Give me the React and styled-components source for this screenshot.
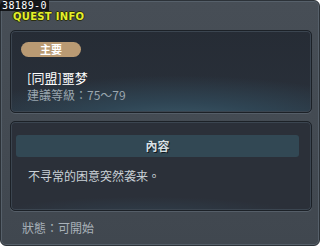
import React from 'react'
import styled, { createGlobalStyle } from 'styled-components'

const GlobalStyle = createGlobalStyle`
  html, body {
    margin: 0;
    padding: 0;
    background: #ffffff;
  }
  body {
    font-family: "Noto Sans CJK TC", "Noto Sans CJK SC", "DejaVu Sans", sans-serif;
  }
`

export const Window = styled.div`
  position: relative;
  width: 320px;
  height: 246px;
  box-sizing: border-box;
  background: linear-gradient(180deg, #474e56 0%, #434a52 60%, #40474f 100%);
  border: 1px solid #2c3238;
  border-radius: 6px;
  box-shadow: inset 0 0 0 1px #56606a;
  padding: 10px 8px 0 9px;
  display: flex;
  flex-direction: column;
`

export const IdTag = styled.div`
  position: absolute;
  left: -1px;
  top: -1px;
  padding: 0 2px 0 2px;
  height: 11px;
  line-height: 11px;
  background: rgba(10, 12, 14, 0.85);
  color: #ffffff;
  font-family: "DejaVu Sans Mono", "Liberation Mono", monospace;
  font-size: 10px;
  letter-spacing: 0.4px;
`

export const Title = styled.div`
  height: 9px;
  line-height: 9px;
  margin-top: 1px;
  padding-left: 3px;
  font-family: "DejaVu Sans", sans-serif;
  font-weight: bold;
  font-size: 10px;
  letter-spacing: 0.3px;
  color: #e4f02a;
  text-shadow: 1px 0 0 #2a2e10, -1px 0 0 #2a2e10, 0 1px 0 #2a2e10, 0 -1px 0 #2a2e10;
  margin-bottom: 9px;
`

export const Card = styled.div`
  box-sizing: border-box;
  width: 302px;
  height: ${p => p.$h}px;
  border: 1px solid #1c2127;
  border-radius: 5px;
  box-shadow: inset 0 0 0 1px #3b4550, 0 1px 0 #555e68;
  background: ${p => p.$bg};
  margin-bottom: ${p => p.$mb || 0}px;
  display: flex;
  flex-direction: column;
`

export const Badge = styled.div`
  width: 60px;
  height: 15px;
  border-radius: 8px;
  background: #b99a73;
  color: #ffffff;
  font-weight: bold;
  font-size: 11px;
  line-height: 15px;
  text-align: center;
  margin: 11px 0 0 10px;
`

export const QuestName = styled.div`
  color: #ffffff;
  font-size: 13px;
  line-height: 15px;
  margin: 13px 0 0 16px;
`

export const Level = styled.div`
  color: #9aa6af;
  font-size: 12px;
  line-height: 14px;
  margin: 3px 0 0 16px;
`

export const SectionBar = styled.div`
  height: 22px;
  margin: 13px 12px 0 5px;
  border-radius: 3px;
  background: #324854;
  color: #d8e0e4;
  font-weight: bold;
  font-size: 12px;
  line-height: 22px;
  text-align: center;
  text-shadow: 1px 1px 0 #10181e;
`

export const Body = styled.div`
  color: #c9d0d6;
  font-size: 12px;
  line-height: 14px;
  margin: 12px 0 0 17px;
`

export const Status = styled.div`
  color: #a9b2b9;
  font-size: 12px;
  line-height: 14px;
  margin: 10px 0 0 12px;
`

export default function App() {
  return (
    <>
      <GlobalStyle />
      <Window>
        <IdTag>38189-0</IdTag>
        <Title>QUEST INFO</Title>
        <Card
          $h={83}
          $mb={8}
          $bg="radial-gradient(ellipse 75% 60% at 55% 115%, #3d5b6b 0%, #2f4554 45%, rgba(40,47,57,0) 100%), linear-gradient(180deg, #262c35 0%, #29303a 100%)"
        >
          <Badge>主要</Badge>
          <QuestName>[同盟]噩梦</QuestName>
          <Level>建議等級：75～79</Level>
        </Card>
        <Card
          $h={90}
          $bg="radial-gradient(ellipse 50% 20% at 45% 105%, #2f3d4a 0%, rgba(42,48,57,0) 100%), #2b3039"
        >
          <SectionBar>內容</SectionBar>
          <Body>不寻常的困意突然袭来。</Body>
        </Card>
        <Status>狀態：可開始</Status>
      </Window>
    </>
  )
}
